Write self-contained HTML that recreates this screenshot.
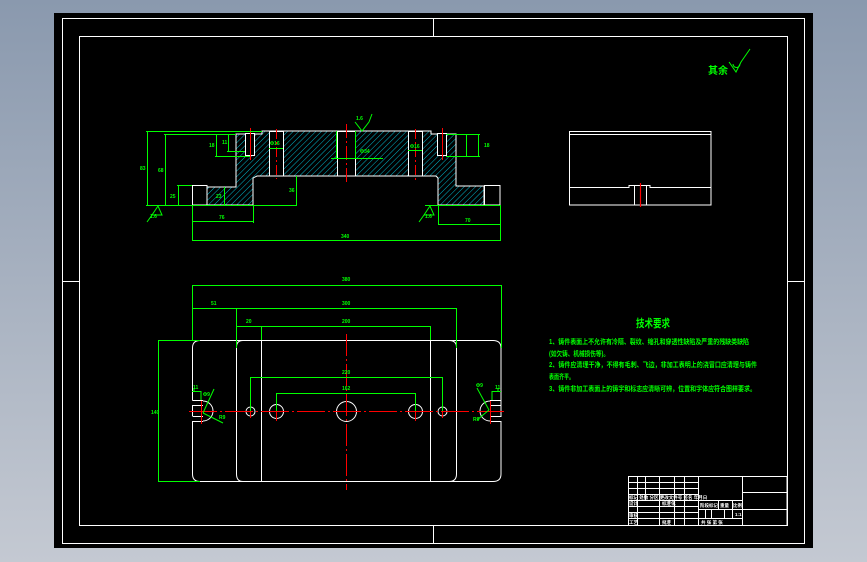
<!DOCTYPE html>
<html><head><meta charset="utf-8">
<style>
html,body{margin:0;padding:0;width:867px;height:562px;overflow:hidden;background:linear-gradient(#8a99ae,#c4c9d2);}
svg{position:absolute;left:0;top:0;}
text{font-family:"Liberation Sans","Noto Sans CJK SC",sans-serif;}
</style></head><body>
<svg width="867" height="562" viewBox="0 0 867 562" xmlns="http://www.w3.org/2000/svg">
<defs>
<pattern id="h" width="4" height="4" patternUnits="userSpaceOnUse" patternTransform="rotate(45)">
<line x1="0" y1="0" x2="0" y2="4" stroke="#00e5ff" stroke-width="0.8"/>
</pattern>
</defs>
<rect x="54" y="13" width="759" height="535" fill="#000"/>
<g fill="none" stroke="#fff" stroke-width="1">
<rect x="62.5" y="18.5" width="742" height="525"/>
<rect x="79.5" y="36.5" width="708" height="489"/>
<line x1="433.5" y1="18" x2="433.5" y2="36"/>
<line x1="433.5" y1="525" x2="433.5" y2="543"/>
<line x1="62" y1="281.5" x2="79" y2="281.5"/>
<line x1="787" y1="281.5" x2="804" y2="281.5"/>
</g>

<!-- section view -->
<polygon points="236,134 262,134 262,131 431,131 431,134 456,134 456,186 484,186 484,205 438,205 438,178 436,176 257,176 253,178 253,205 207,205 207,187 236,187" fill="url(#h)" stroke="#fff" stroke-width="1"/>
<g fill="#000" stroke="#fff" stroke-width="1">
<rect x="245.5" y="133.5" width="9" height="22"/>
<rect x="437.5" y="133.5" width="9" height="22"/>
<rect x="269.5" y="131.5" width="14" height="44.5"/>
<rect x="337.5" y="131.5" width="18" height="44.5"/>
<rect x="408.5" y="131.5" width="14" height="44.5"/>
<rect x="192.5" y="185.5" width="14.5" height="19.5"/>
<rect x="484.5" y="185.5" width="15.5" height="19.5"/>
</g>
<g stroke="#f00" stroke-width="1">
<line x1="250.5" y1="128" x2="250.5" y2="160"/>
<line x1="442.5" y1="128" x2="442.5" y2="160"/>
<line x1="276.5" y1="129" x2="276.5" y2="179" stroke-dasharray="10,3,2,3"/>
<line x1="346.5" y1="124" x2="346.5" y2="182" stroke-dasharray="14,3,2,3"/>
<line x1="415.5" y1="129" x2="415.5" y2="181" stroke-dasharray="10,3,2,3"/>
</g>
<g stroke="#0f0" stroke-width="1" fill="none">
<line x1="146" y1="131.5" x2="262" y2="131.5"/>
<line x1="164" y1="134.5" x2="236" y2="134.5"/>
<line x1="147.5" y1="131" x2="147.5" y2="205"/>
<line x1="165.5" y1="134" x2="165.5" y2="205"/>
<line x1="178.5" y1="185" x2="178.5" y2="205"/>
<line x1="177" y1="185.5" x2="192" y2="185.5"/>
<line x1="146" y1="205.5" x2="297" y2="205.5"/>
<line x1="216.5" y1="134" x2="216.5" y2="156"/>
<line x1="228.5" y1="134" x2="228.5" y2="152"/>
<line x1="215" y1="156.5" x2="250" y2="156.5"/>
<line x1="227" y1="151.5" x2="245" y2="151.5"/>
<line x1="296.5" y1="176" x2="296.5" y2="205"/>
<line x1="224.5" y1="187" x2="224.5" y2="205"/>
<line x1="269" y1="148.5" x2="283" y2="148.5"/>
<line x1="408" y1="150.5" x2="422" y2="150.5"/>
<line x1="331" y1="158.5" x2="383" y2="158.5"/>
<line x1="336.5" y1="131" x2="336.5" y2="158"/>
<line x1="355.5" y1="131" x2="355.5" y2="158"/>
<line x1="192.5" y1="205" x2="192.5" y2="241"/>
<line x1="253.5" y1="205" x2="253.5" y2="223"/>
<line x1="192" y1="221.5" x2="253" y2="221.5"/>
<line x1="192" y1="240.5" x2="501" y2="240.5"/>
<line x1="500.5" y1="205" x2="500.5" y2="241"/>
<line x1="438.5" y1="205" x2="438.5" y2="225"/>
<line x1="438" y1="224.5" x2="500" y2="224.5"/>
<line x1="446" y1="134.5" x2="480" y2="134.5"/>
<line x1="446" y1="156.5" x2="480" y2="156.5"/>
<line x1="466.5" y1="134" x2="466.5" y2="156"/>
<line x1="478.5" y1="134" x2="478.5" y2="156"/>
<line x1="425" y1="205.5" x2="500" y2="205.5"/>
<path d="M158,206 L152,215 L162,215 Z M152,215 L147,222"/>
<path d="M430,206 L424,215 L434,215 Z M424,215 L419,222"/>
<path d="M355,122 L362,131 L369,122 M369,122 L372,114"/>
</g>
<g fill="#0f0" font-size="5" font-weight="bold">
<text x="140" y="170">83</text><text x="158" y="172">68</text><text x="170" y="198">25</text>
<text x="209" y="147">18</text><text x="222" y="144">11</text>
<text x="270" y="145">Φ16</text><text x="410" y="148">Φ16</text><text x="360" y="153">Φ34</text>
<text x="216" y="198">23</text><text x="289" y="192">36</text><text x="219" y="219">76</text>
<text x="341" y="238">340</text><text x="465" y="222">70</text><text x="484" y="147">18</text>
<text x="150" y="218">1.6</text><text x="425" y="218">1.6</text><text x="356" y="120">1.6</text>
</g>

<!-- side view -->
<g fill="none" stroke="#fff" stroke-width="1">
<rect x="569.5" y="131.5" width="141.5" height="73.5"/>
<line x1="569" y1="134.5" x2="711" y2="134.5"/>
<path d="M569,187.5 H629 V185.5 H650 V187.5 H711"/>
<line x1="634.5" y1="186" x2="634.5" y2="205"/>
<line x1="646.5" y1="186" x2="646.5" y2="205"/>
</g>
<line x1="640.5" y1="183" x2="640.5" y2="207" stroke="#f00" stroke-width="1.2"/>
<text x="708" y="74" fill="#0f0" font-size="10" font-weight="bold">其余</text>
<path d="M729,62 L736,72 L741,62 M741,62 L750,49 M733,64 a3,3 0 1 0 7,0" stroke="#0f0" fill="none"/>

<!-- plan view -->
<g fill="none" stroke="#fff" stroke-width="1">
<path d="M200,340.5 H493 Q501,340.5 501,348 V400.5 H490 M490,405.5 H501 V405.5 M501,400 V405 M490,416.5 H501 V416 M490,421.5 H501 V474 Q501,481.5 493,481.5 H200 Q192.5,481.5 192.5,474 V421.5 H203 M192.5,416.5 H203 M192.5,405.5 H203 M192.5,400.5 H203 M192.5,400.5 V348 Q192.5,340.5 200,340.5"/>
<line x1="501" y1="405" x2="501" y2="416"/>
<line x1="192.5" y1="405" x2="192.5" y2="416"/>
<path d="M243,340.5 H449 Q456.5,340.5 456.5,347 V474 Q456.5,481.5 449,481.5 H243 Q236.5,481.5 236.5,474 V347 Q236.5,340.5 243,340.5"/>
<line x1="261.5" y1="340" x2="261.5" y2="481"/>
<line x1="430.5" y1="340" x2="430.5" y2="481"/>
<path d="M203,401 A10,10 0 0 1 203,421"/>
<path d="M490,401 A10,10 0 0 0 490,421"/>
<circle cx="250.5" cy="411.5" r="4.5"/>
<circle cx="276.5" cy="411.5" r="7"/>
<circle cx="346.5" cy="411.5" r="10"/>
<circle cx="415.5" cy="411.5" r="7"/>
<circle cx="442.5" cy="411.5" r="4.5"/>
</g>
<g stroke="#f00" stroke-width="1">
<line x1="189" y1="411.5" x2="504" y2="411.5" stroke-dasharray="28,3,2,3"/>
<line x1="346.5" y1="334" x2="346.5" y2="490" stroke-dasharray="22,3,2,3"/>
<line x1="201.5" y1="401" x2="201.5" y2="424"/>
<line x1="490.5" y1="401" x2="490.5" y2="424"/>
<line x1="276.5" y1="402" x2="276.5" y2="421"/><line x1="415.5" y1="402" x2="415.5" y2="421"/>
<line x1="250.5" y1="404" x2="250.5" y2="418"/><line x1="442.5" y1="404" x2="442.5" y2="418"/>
</g>
<g stroke="#0f0" stroke-width="1" fill="none">
<line x1="192" y1="285.5" x2="501" y2="285.5"/>
<line x1="192.5" y1="285" x2="192.5" y2="340"/>
<line x1="501.5" y1="285" x2="501.5" y2="348"/>
<line x1="192" y1="308.5" x2="457" y2="308.5"/>
<line x1="236.5" y1="308" x2="236.5" y2="348"/>
<line x1="456.5" y1="308" x2="456.5" y2="348"/>
<line x1="236" y1="326.5" x2="431" y2="326.5"/>
<line x1="261.5" y1="326" x2="261.5" y2="340"/>
<line x1="430.5" y1="326" x2="430.5" y2="340"/>
<line x1="250" y1="377.5" x2="443" y2="377.5"/>
<line x1="250.5" y1="377" x2="250.5" y2="411"/>
<line x1="442.5" y1="377" x2="442.5" y2="411"/>
<line x1="276" y1="393.5" x2="416" y2="393.5"/>
<line x1="276.5" y1="393" x2="276.5" y2="411"/>
<line x1="415.5" y1="393" x2="415.5" y2="411"/>
<line x1="158.5" y1="340" x2="158.5" y2="481"/>
<line x1="158" y1="340.5" x2="200" y2="340.5"/>
<line x1="158" y1="481.5" x2="200" y2="481.5"/>
<path d="M192,391.5 H201 V400 M194,388 V391"/>
<path d="M501,391.5 H492 V400 M498,388 V391"/>
<line x1="214" y1="389" x2="203" y2="413"/><line x1="203" y1="413" x2="223" y2="423"/>
<line x1="477" y1="388" x2="489" y2="410"/><line x1="489" y1="410" x2="477" y2="420"/>
</g>
<g fill="#0f0" font-size="5" font-weight="bold">
<text x="342" y="281">380</text><text x="211" y="305">51</text><text x="342" y="305">300</text>
<text x="246" y="323">20</text><text x="342" y="323">200</text><text x="342" y="374">220</text>
<text x="342" y="390">162</text><text x="151" y="414">140</text>
<text x="193" y="389">11</text><text x="495" y="389">11</text>
<text x="203" y="396">Φ9</text><text x="219" y="419">R9</text><text x="476" y="387">Φ9</text><text x="473" y="421">R9</text>
</g>

<!-- technical requirements -->
<g fill="#0f0" font-weight="bold">
<text x="636" y="327" font-size="11" textLength="34" lengthAdjust="spacingAndGlyphs">技术要求</text>
<g font-size="7">
<text x="549" y="344" textLength="200" lengthAdjust="spacingAndGlyphs">1、铸件表面上不允许有冷隔、裂纹、缩孔和穿透性缺陷及严重的残缺类缺陷</text>
<text x="549" y="356" textLength="60" lengthAdjust="spacingAndGlyphs">(如欠铸、机械损伤等)。</text>
<text x="549" y="367" textLength="208" lengthAdjust="spacingAndGlyphs">2、铸件应清理干净，不得有毛刺、飞边，非加工表明上的浇冒口应清理与铸件</text>
<text x="549" y="379" textLength="25" lengthAdjust="spacingAndGlyphs">表面齐平。</text>
<text x="549" y="391" textLength="207" lengthAdjust="spacingAndGlyphs">3、铸件非加工表面上的铸字和标志应清晰可辨，位置和字体应符合图样要求。</text>
</g></g>

<!-- title block -->
<g fill="none" stroke="#fff" stroke-width="1">
<rect x="628.5" y="476.5" width="158.5" height="49"/>
<line x1="698.5" y1="476" x2="698.5" y2="525"/>
<line x1="742.5" y1="476" x2="742.5" y2="525"/>
<line x1="628" y1="482.5" x2="698" y2="482.5"/>
<line x1="628" y1="488.5" x2="698" y2="488.5"/>
<line x1="628" y1="494.5" x2="698" y2="494.5"/>
<line x1="628" y1="500.5" x2="742" y2="500.5"/>
<line x1="628" y1="506.5" x2="698" y2="506.5"/>
<line x1="628" y1="512.5" x2="698" y2="512.5"/>
<line x1="628" y1="518.5" x2="698" y2="518.5"/>
<line x1="698" y1="509.5" x2="742" y2="509.5"/>
<line x1="698" y1="518.5" x2="742" y2="518.5"/>
<line x1="742" y1="492.5" x2="787" y2="492.5"/>
<line x1="742" y1="509.5" x2="787" y2="509.5"/>
<line x1="637.5" y1="476" x2="637.5" y2="525"/>
<line x1="645.5" y1="476" x2="645.5" y2="500"/>
<line x1="659.5" y1="476" x2="659.5" y2="525"/>
<line x1="674.5" y1="476" x2="674.5" y2="525"/>
<line x1="684.5" y1="476" x2="684.5" y2="525"/>
<line x1="718.5" y1="500" x2="718.5" y2="509"/>
<line x1="732.5" y1="500" x2="732.5" y2="518"/>
<line x1="705.5" y1="509" x2="705.5" y2="518"/>
<line x1="711.5" y1="509" x2="711.5" y2="518"/>
<line x1="724.5" y1="509" x2="724.5" y2="518"/>
</g>
<g fill="#fff" font-size="4.5" font-weight="bold">
<text x="629" y="499">标记 处数 分区 更改文件号 签名 年月日</text>
<text x="629" y="505">设计</text><text x="662" y="505">标准化</text>
<text x="629" y="517">审核</text><text x="629" y="524">工艺</text><text x="662" y="524">批准</text>
<text x="700" y="507">阶段标记</text><text x="720" y="507">重量</text><text x="733" y="507">比例</text>
<text x="735" y="516">1:1</text><text x="701" y="524">共 张 第 张</text>
</g>
</svg>
</body></html>
